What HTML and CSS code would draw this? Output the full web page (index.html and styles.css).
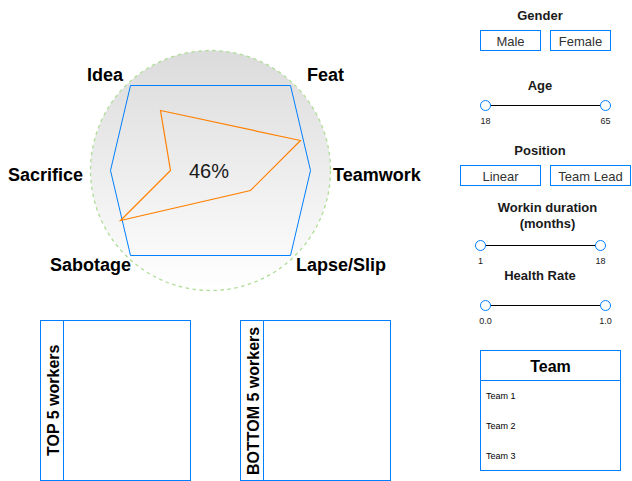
FILE: index.html
```html
<!DOCTYPE html>
<html lang="en">
<head>
<meta charset="utf-8">
<title>Team overview</title>
<link rel="stylesheet" href="styles.css">
</head>
<body>
<div class="page">
  <main class="main">
    <svg class="chart" viewBox="0 0 440 300" role="img">
      <defs>
        <linearGradient id="shade" x1="0" y1="0" x2="0" y2="1">
          <stop offset="0" stop-color="#dbdbdb"/>
          <stop offset="1" stop-color="#ffffff"/>
        </linearGradient>
      </defs>
      <circle class="chart-ring" cx="210.5" cy="170.5" r="120" fill="url(#shade)"/>
      <polygon class="chart-frame" points="130.5,85.5 290.5,85.5 310.5,170.5 290.5,255.5 130.5,255.5 110.5,170.5"/>
      <polygon class="chart-value" points="160.5,110.5 300.5,140.5 250.5,190.5 120.5,220.5 170.5,170.5"/>
      <text class="chart-label" x="87" y="81">Idea</text>
      <text class="chart-label" x="307" y="81">Feat</text>
      <text class="chart-label" x="8" y="181">Sacrifice</text>
      <text class="chart-label" x="333" y="181">Teamwork</text>
      <text class="chart-label" x="50" y="271">Sabotage</text>
      <text class="chart-label" x="296" y="271">Lapse/Slip</text>
      <text class="chart-total" x="189" y="178">46%</text>
    </svg>
    <div class="lanes">
      <section class="lane"><h2 class="lane-title">TOP 5 workers</h2></section>
      <section class="lane"><h2 class="lane-title">BOTTOM 5 workers</h2></section>
    </div>
  </main>

  <aside class="filters">
    <section class="filter filter-gender">
      <h2 class="filter-title">Gender</h2>
      <div class="choices">
        <button class="choice choice-small" type="button">Male</button>
        <button class="choice choice-small" type="button">Female</button>
      </div>
    </section>

    <section class="filter filter-age">
      <h2 class="filter-title">Age</h2>
      <div class="range">
        <div class="range-track">
          <input class="range-input" type="range" min="18" max="65" value="18" aria-label="Minimum age">
          <input class="range-input" type="range" min="18" max="65" value="65" aria-label="Maximum age">
        </div>
        <div class="range-scale"><span>18</span><span>65</span></div>
      </div>
    </section>

    <section class="filter filter-position">
      <h2 class="filter-title">Position</h2>
      <div class="choices choices-wide">
        <button class="choice" type="button">Linear</button>
        <button class="choice" type="button">Team Lead</button>
      </div>
    </section>

    <section class="filter filter-duration">
      <h2 class="filter-title filter-title-wide">Workin duration<br>(months)</h2>
      <div class="range range-near">
        <div class="range-track">
          <input class="range-input" type="range" min="1" max="18" value="1" aria-label="Minimum months">
          <input class="range-input" type="range" min="1" max="18" value="18" aria-label="Maximum months">
        </div>
        <div class="range-scale"><span>1</span><span>18</span></div>
      </div>
    </section>

    <section class="filter filter-health">
      <h2 class="filter-title">Health Rate</h2>
      <div class="range">
        <div class="range-track">
          <input class="range-input" type="range" min="0" max="1" step="0.1" value="0" aria-label="Minimum health rate">
          <input class="range-input" type="range" min="0" max="1" step="0.1" value="1" aria-label="Maximum health rate">
        </div>
        <div class="range-scale"><span>0.0</span><span>1.0</span></div>
      </div>
    </section>

    <table class="team">
      <thead><tr><th>Team</th></tr></thead>
      <tbody>
        <tr><td>Team 1</td></tr>
        <tr><td>Team 2</td></tr>
        <tr><td>Team 3</td></tr>
      </tbody>
    </table>
  </aside>
</div>
</body>
</html>
```

FILE: styles.css
```css
* {
  box-sizing: border-box;
}

body {
  margin: 0;
  background: #fff;
  color: #000;
  font-family: "Liberation Sans", Arial, sans-serif;
}

h2 {
  margin: 0;
}

.page {
  display: grid;
  grid-template-columns: minmax(0, 1fr) 172px;
  column-gap: 20px;
}

/* Chart */
.chart {
  display: block;
  width: 100%;
  max-width: 600px;
}

.chart-ring {
  stroke: #b0dd98;
  stroke-width: 1.3;
  stroke-dasharray: 3.5 3.5;
}

.chart-frame {
  fill: none;
  stroke: #007fff;
}

.chart-value {
  fill: none;
  stroke: #ff8000;
  stroke-width: 1.2;
}

.chart-label {
  font-size: 18px;
  font-weight: bold;
}

.chart-total {
  fill: #1a1a1a;
  font-size: 20px;
}

/* Worker lanes */
.lanes {
  display: grid;
  grid-template-columns: 1fr 1fr;
  gap: 49px;
  max-width: 600px;
  padding: 20px 49px 0 40px;
}

.lane {
  display: flex;
  min-height: 161px;
  border: 1px solid #007fff;
}

.lane-title {
  width: 23px;
  border-left: 1px solid #007fff;
  writing-mode: vertical-rl;
  transform: rotate(180deg);
  font-size: 16px;
  line-height: 26px;
  text-align: center;
}

/* Filters */
.filters {
  padding-top: 8px;
}

.filter-title {
  width: 160px;
  color: #1a1a1a;
  font-size: 13px;
  line-height: 16px;
  text-align: center;
}

.filter-title-wide {
  width: 100%;
  padding-left: 3px;
}

.filter-age {
  margin-top: 27px;
}

.filter-position {
  margin-top: 16px;
}

.filter-duration {
  margin-top: 14px;
}

.filter-health {
  padding-top: 1px;
}

.choices {
  display: flex;
  gap: 9px;
  margin: 6px 0 0 20px;
}

.choices-wide {
  margin-left: 0;
}

.choice {
  width: 81px;
  height: 21px;
  padding: 2px 0 0;
  border: 1px solid #007fff;
  background: #fff;
  color: #333;
  font: 13px/17px "Liberation Sans", Arial, sans-serif;
}

.choice-small {
  width: 61px;
}

.range {
  width: 135px;
  margin: 6px 0 0 18px;
}

.range-near {
  margin: 8px 0 0 13px;
}

.filter-health .range {
  margin-top: 16px;
}

.range-track {
  display: grid;
  height: 11px;
  margin: 0 2px;
  background: linear-gradient(#000, #000) center / 100% 1px no-repeat;
}

.range-input {
  grid-area: 1 / 1;
  width: 100%;
  height: 11px;
  margin: 0;
  background: none;
  appearance: none;
  pointer-events: none;
}

.range-input::-webkit-slider-thumb {
  width: 11px;
  height: 11px;
  border: 1px solid #007fff;
  border-radius: 50%;
  background: #fff;
  appearance: none;
  pointer-events: auto;
}

.range-scale {
  display: flex;
  justify-content: space-between;
  margin-top: 4px;
  color: #1a1a1a;
  font-size: 9px;
  line-height: 12px;
  text-align: center;
}

.range-scale span {
  width: 15px;
}

/* Team table */
.team {
  width: 141px;
  margin: 23px 0 0 20px;
  border: 1px solid #007fff;
  border-spacing: 0;
}

.team th {
  height: 30px;
  padding: 2px 0 0;
  border-bottom: 1px solid #007fff;
  font-size: 16px;
}

.team td {
  height: 30px;
  padding: 0 5px;
  font-size: 9px;
}

.team tr:last-child td {
  height: 29px;
}
```
